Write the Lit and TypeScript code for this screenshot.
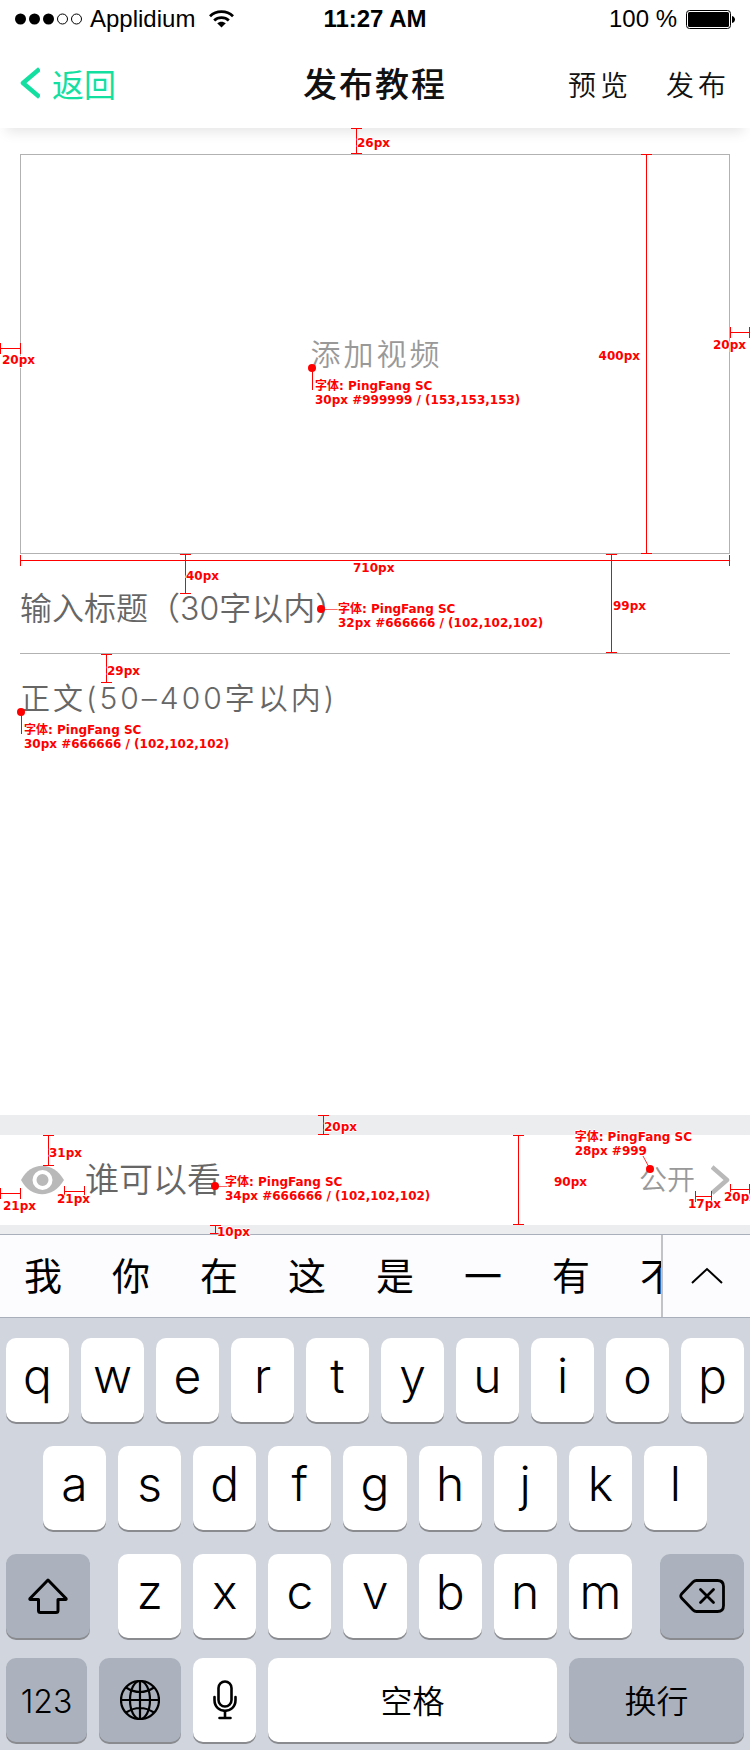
import { LitElement, html, css, svg, nothing } from "lit";
import { customElement, property } from "lit/decorators.js";
import { classMap } from "lit/directives/class-map.js";
import { styleMap } from "lit/directives/style-map.js";

interface Point {
  left?: number;
  right?: number;
  top: number;
}

interface Measure {
  axis: "x" | "y";
  at: Point;
  length?: number;
  label: string;
  labelAt: Point;
}

interface Note {
  dot: Point;
  leader: "down" | "right" | "diagonal";
  textAt: Point;
  lines: string[];
}

const px = (p: Point) => ({
  left: p.left === undefined ? undefined : `${p.left}px`,
  right: p.right === undefined ? undefined : `${p.right}px`,
  top: `${p.top}px`,
});

/** Red redline layer laid over the section that contains it. */
@customElement("spec-layer")
export class SpecLayer extends LitElement {
  @property({ attribute: false }) measures: Measure[] = [];
  @property({ attribute: false }) notes: Note[] = [];

  static styles = css`
    :host {
      position: absolute;
      inset: 0;
      z-index: 3;
      pointer-events: none;
      color: #f00;
      font: bold 12px/14px "DejaVu Sans", "Noto Sans CJK SC", sans-serif;
      white-space: nowrap;
    }
    .bar {
      position: absolute;
      box-sizing: border-box;
    }
    .bar.x {
      height: 11px;
      border: solid #f00;
      border-width: 0 1px;
      background: linear-gradient(#f00, #f00) center / 100% 1px no-repeat;
    }
    .bar.y {
      width: 11px;
      border: solid #f00;
      border-width: 1px 0;
      background: linear-gradient(#f00, #f00) center / 1px 100% no-repeat;
    }
    .text {
      position: absolute;
      text-shadow: 1px 0 #fff, -1px 0 #fff, 0 1px #fff, 0 -1px #fff;
    }
    .line {
      display: block;
    }
    .dot {
      position: absolute;
      overflow: visible;
    }
  `;

  private leader(kind: Note["leader"]) {
    if (kind === "down") return svg`<path d="M4.5 4V26" stroke="#f00"/>`;
    if (kind === "right") return svg`<path d="M4 4.5H21" stroke="#f00" opacity=".6"/>`;
    return svg`<path d="M4 4L-3 -9" stroke="#f00" opacity=".8"/>`;
  }

  render() {
    return html`
      ${this.measures.map(
        (m) => html`
          <span
            class=${classMap({ bar: true, [m.axis]: true })}
            style=${styleMap({
              ...px(m.at),
              [m.axis === "x" ? "width" : "height"]:
                m.length === undefined ? undefined : `${m.length}px`,
            })}
          ></span>
          <span class="text" style=${styleMap(px(m.labelAt))}>${m.label}</span>
        `
      )}
      ${this.notes.map(
        (n) => html`
          <svg class="dot" width="8" height="8" style=${styleMap(px(n.dot))} aria-hidden="true">
            ${this.leader(n.leader)}
            <circle cx="4" cy="4" r="4" fill="#f00" />
          </svg>
          <span class="text" style=${styleMap(px(n.textAt))}
            >${n.lines.map((l) => html`<span class="line">${l}</span>`)}</span
          >
        `
      )}
    `;
  }
}

const EDITOR_MEASURES: Measure[] = [
  { axis: "y", at: { left: 351, top: 0 }, length: 26, label: "26px", labelAt: { left: 357, top: 8 } },
  { axis: "y", at: { right: 98, top: 26 }, length: 400, label: "400px", labelAt: { right: 110, top: 221 } },
  { axis: "x", at: { left: 0, top: 215 }, length: 21, label: "20px", labelAt: { left: 2, top: 225 } },
  { axis: "x", at: { right: 0, top: 199 }, length: 20, label: "20px", labelAt: { right: 4, top: 210 } },
  { axis: "x", at: { left: 20, right: 20, top: 427 }, label: "710px", labelAt: { left: 353, top: 433 } },
  { axis: "y", at: { left: 180, top: 426 }, length: 40, label: "40px", labelAt: { left: 186, top: 441 } },
  { axis: "y", at: { right: 133, top: 426 }, length: 99, label: "99px", labelAt: { right: 104, top: 471 } },
  { axis: "y", at: { left: 101, top: 526 }, length: 29, label: "29px", labelAt: { left: 107, top: 536 } },
];

const EDITOR_NOTES: Note[] = [
  {
    dot: { left: 308, top: 236 },
    leader: "down",
    textAt: { left: 315, top: 251 },
    lines: ["字体: PingFang SC", "30px #999999 / (153,153,153)"],
  },
  {
    dot: { left: 317, top: 477 },
    leader: "right",
    textAt: { left: 338, top: 474 },
    lines: ["字体: PingFang SC", "32px #666666 / (102,102,102)"],
  },
  {
    dot: { left: 17, top: 580 },
    leader: "down",
    textAt: { left: 24, top: 595 },
    lines: ["字体: PingFang SC", "30px #666666 / (102,102,102)"],
  },
];

const AUDIENCE_MEASURES: Measure[] = [
  { axis: "y", at: { left: 318, top: 0 }, length: 20, label: "20px", labelAt: { left: 324, top: 5 } },
  { axis: "y", at: { left: 43, top: 20 }, length: 31, label: "31px", labelAt: { left: 49, top: 31 } },
  { axis: "x", at: { left: 0, top: 73 }, length: 21, label: "21px", labelAt: { left: 3, top: 84 } },
  { axis: "x", at: { left: 64, top: 71 }, length: 21, label: "21px", labelAt: { left: 57, top: 77 } },
  { axis: "y", at: { left: 210, top: 110 }, length: 9, label: "10px", labelAt: { left: 217, top: 110 } },
  { axis: "y", at: { right: 226, top: 20 }, length: 90, label: "90px", labelAt: { right: 163, top: 60 } },
  { axis: "x", at: { right: 38, top: 76 }, length: 17, label: "17px", labelAt: { right: 29, top: 82 } },
  { axis: "x", at: { right: 0, top: 69 }, length: 20, label: "20px", labelAt: { right: -7, top: 75 } },
];

const AUDIENCE_NOTES: Note[] = [
  {
    dot: { left: 211, top: 67 },
    leader: "right",
    textAt: { left: 225, top: 60 },
    lines: ["字体: PingFang SC", "34px #666666 / (102,102,102)"],
  },
  {
    dot: { right: 96, top: 50 },
    leader: "diagonal",
    textAt: { right: 58, top: 15 },
    lines: ["字体: PingFang SC", "28px #999"],
  },
];

@customElement("status-bar")
export class StatusBar extends LitElement {
  static styles = css`
    :host {
      display: grid;
      grid-template-columns: 1fr auto 1fr;
      align-items: center;
      height: 38px;
      padding: 0 15px;
      color: #000;
      font: 24px/28px "Liberation Sans", Arial, sans-serif;
    }
    .side {
      display: flex;
      align-items: center;
    }
    .carrier {
      margin: 0 14px 0 8px;
    }
    .time {
      font-weight: bold;
    }
    .end {
      justify-content: flex-end;
      gap: 9px;
    }
  `;

  render() {
    return html`
      <div class="side">
        <svg width="67" height="12" viewBox="0 0 67 12" aria-hidden="true">
          <circle cx="5.5" cy="6" r="5.5" />
          <circle cx="19.5" cy="6" r="5.5" />
          <circle cx="33.5" cy="6" r="5.5" />
          <circle cx="47.5" cy="6" r="5" fill="none" stroke="#000" />
          <circle cx="61.5" cy="6" r="5" fill="none" stroke="#000" />
        </svg>
        <span class="carrier">Applidium</span>
        <svg width="25" height="18" viewBox="0 0 25 18" aria-hidden="true">
          <g fill="none" stroke="#000" stroke-width="2.8">
            <path d="M1 6.2C7.3 .1 17.7 .1 24 6.2" />
            <path d="M5.2 10.4C9.2 6.6 15.8 6.6 19.8 10.4" />
          </g>
          <path d="M8.2 13.3C10.6 11.1 14.4 11.1 16.8 13.3L12.5 17.6Z" />
        </svg>
      </div>
      <span class="time">11:27 AM</span>
      <div class="side end">
        <span>100 %</span>
        <svg width="49" height="19" viewBox="0 0 49 19" aria-hidden="true">
          <rect x=".5" y=".5" width="44" height="18" rx="3" fill="none" stroke="#000" />
          <rect x="2" y="2" width="41" height="15" rx="1.5" />
          <path d="M46 6C48 6.5 49 8 49 9.5S48 12.5 46 13Z" />
        </svg>
      </div>
    `;
  }
}

type Glyph = "shift" | "delete" | "globe" | "mic";

interface Key {
  label: string;
  size: "letter" | "word" | "icon";
  grow: number;
  dark?: boolean;
  icon?: Glyph;
}

const letters = (s: string): Key[] =>
  [...s].map((label) => ({ label, size: "letter", grow: 63 }));

const GLYPHS: Record<Glyph, unknown> = {
  shift: html`<svg width="40" height="36" viewBox="0 0 40 36" fill="none" stroke="#000" stroke-width="3" stroke-linejoin="round" aria-hidden="true">
    <path d="M20 2L38 20.5Q38.5 21.5 37.5 21.5H30V32.5Q30 34.5 28 34.5H12.500Q10.5 34.5 10.5 32.5V21.5H2.5Q1.5 21.5 2 20.5Z" />
  </svg>`,
  delete: html`<svg width="46" height="34" viewBox="0 0 46 34" fill="none" stroke="#000" stroke-width="2.8" stroke-linecap="round" stroke-linejoin="round" aria-hidden="true">
    <path d="M17.5 1.5H38.5Q44.5 1.5 44.5 7.5V26.5Q44.5 32.5 38.5 32.5H17.5Q15.5 32.5 14 31L2.5 19Q1 17 2.5 15L14 3Q15.5 1.5 17.5 1.5Z" />
    <path d="M21.5 10.500L34.5 23.5M34.5 10.500L21.5 23.5" />
  </svg>`,
  globe: html`<svg width="40" height="40" viewBox="0 0 40 40" fill="none" stroke="#000" stroke-width="2.2" aria-hidden="true">
    <circle cx="20" cy="20" r="19" />
    <ellipse cx="20" cy="20" rx="10" ry="19" />
    <path d="M20 1V39M1 20H39M6 7.5Q20 16.5 34 7.5M6 32.5Q20 23.5 34 32.5" />
  </svg>`,
  mic: html`<svg width="24" height="40" viewBox="0 0 24 40" fill="none" stroke="#000" stroke-width="2.6" stroke-linecap="round" aria-hidden="true">
    <rect x="5.5" y="1.5" width="13" height="25" rx="6.5" />
    <path d="M1.5 17V20C1.5 34.5 22.5 34.5 22.5 20V17M12 31V37.5M6.5 38H17.5" />
  </svg>`,
};

const ROWS: { name: string; keys: Key[] }[] = [
  { name: "top", keys: letters("qwertyuiop") },
  { name: "home", keys: letters("asdfghjkl") },
  {
    name: "lower",
    keys: [
      { label: "shift", size: "icon", grow: 84, dark: true, icon: "shift" },
      ...letters("zxcvbnm"),
      { label: "delete", size: "icon", grow: 84, dark: true, icon: "delete" },
    ],
  },
  {
    name: "bottom",
    keys: [
      { label: "123", size: "word", grow: 81, dark: true },
      { label: "globe", size: "icon", grow: 82, dark: true, icon: "globe" },
      { label: "mic", size: "icon", grow: 63, icon: "mic" },
      { label: "空格", size: "word", grow: 289 },
      { label: "换行", size: "word", grow: 175, dark: true },
    ],
  },
];

@customElement("soft-keyboard")
export class SoftKeyboard extends LitElement {
  static styles = css`
    :host {
      display: block;
      background: #d1d5dd;
      font-family: Inter, "Noto Sans CJK SC", sans-serif;
    }
    button {
      margin: 0;
      padding: 0;
      border: 0;
      background: none;
      color: #000;
      font: inherit;
    }
    .candidates {
      display: flex;
      height: 82px;
      border: solid #a9b0bb;
      border-width: 1px 0;
      background: #fcfcfe;
    }
    .words {
      display: flex;
      flex: 1;
      gap: 50px;
      min-width: 0;
      overflow: hidden;
      padding-left: 24px;
    }
    .word {
      flex: none;
      width: 38px;
      font-size: 38px;
      line-height: 80px;
    }
    .expand {
      display: flex;
      flex: none;
      align-items: center;
      justify-content: center;
      width: 89px;
      border-left: 2px solid #c2c3c6;
    }
    .rows {
      display: grid;
      gap: 24px;
      padding: 20px 6px 8px;
    }
    .row {
      display: flex;
      gap: 12px;
    }
    .home {
      padding: 0 37px;
    }
    .bottom {
      margin-top: -4px;
    }
    .key {
      display: flex;
      flex: 1 1 0;
      align-items: center;
      justify-content: center;
      box-sizing: border-box;
      min-width: 0;
      height: 84px;
      border-radius: 10px;
      background: #fff;
      box-shadow: 0 2px #898b8f;
    }
    .letter {
      padding-bottom: 9px;
      font-size: 48px;
      font-weight: 350;
      line-height: 60px;
    }
    .label {
      padding-top: 3px;
      font-size: 32px;
      font-weight: 350;
      line-height: 40px;
    }
    .dark {
      background: #abb2bd;
    }
    .lower .icon:first-child {
      margin-right: 16px;
    }
    .lower .icon:last-child {
      margin-left: 16px;
    }
  `;

  render() {
    return html`
      <div class="candidates">
        <div class="words">
          ${[..."我你在这是一有不"].map((w) => html`<button class="word">${w}</button>`)}
        </div>
        <button class="expand" aria-label="展开">
          <svg width="32" height="18" viewBox="0 0 32 18" fill="none" stroke="#000" stroke-width="2" aria-hidden="true">
            <path d="M1 16L16 2L31 16" />
          </svg>
        </button>
      </div>
      <div class="rows">
        ${ROWS.map(
          (row) => html`<div class="row ${row.name}">
            ${row.keys.map(
              (k) => html`<button
                class=${classMap({
                  key: true,
                  letter: k.size === "letter",
                  label: k.size === "word",
                  icon: k.size === "icon",
                  dark: !!k.dark,
                })}
                style=${styleMap({ flexGrow: String(k.grow) })}
                aria-label=${k.icon ? k.label : nothing}
              >
                ${k.icon ? GLYPHS[k.icon] : k.label}
              </button>`
            )}
          </div>`
        )}
      </div>
    `;
  }
}

@customElement("app-root")
export class AppRoot extends LitElement {
  static styles = css`
    :host {
      display: flex;
      flex-direction: column;
      min-height: 100vh;
      overflow: hidden;
      background: #fff;
      color: #666;
      font-family: Inter, "Noto Sans CJK SC", sans-serif;
    }
    button,
    input,
    textarea {
      margin: 0;
      padding: 0;
      border: 0;
      border-radius: 0;
      outline: 0;
      background: none;
      color: inherit;
      font: inherit;
      letter-spacing: inherit;
    }
    ::placeholder {
      color: #666;
      opacity: 1;
    }
    .top {
      position: relative;
      z-index: 1;
      background: #fff;
      box-shadow: 0 10px 12px -6px rgba(0, 0, 0, 0.1);
    }
    .nav {
      display: grid;
      grid-template-columns: 1fr auto 1fr;
      align-items: center;
      height: 90px;
      padding: 0 20px;
      color: #111;
      font-family: "Noto Sans CJK SC", sans-serif;
    }
    .back {
      display: flex;
      align-items: center;
      justify-self: start;
      gap: 12px;
      color: #13dfa1;
      font-size: 32px;
      line-height: 40px;
    }
    .title {
      margin: 0;
      font-size: 34px;
      font-weight: 500;
      line-height: 40px;
      letter-spacing: 2px;
    }
    .actions {
      display: flex;
      justify-content: flex-end;
      gap: 34px;
      padding-top: 2px;
      font-size: 28px;
      font-weight: 350;
      line-height: 40px;
      letter-spacing: 4px;
    }
    .editor {
      position: relative;
      display: flex;
      flex: 1;
      flex-direction: column;
      padding: 26px 20px 0;
      font-weight: 350;
    }
    .video {
      height: 400px;
      border: 1px solid #b2b2b2;
      padding-left: 3px;
      color: #999;
      font-size: 30px;
      line-height: 40px;
      letter-spacing: 3px;
    }
    .heading {
      box-sizing: border-box;
      width: 100%;
      height: 100px;
      padding-top: 10px;
      border-bottom: 1px solid #b2b2b2;
      font-size: 32px;
      line-height: 48px;
    }
    .body {
      flex: 1;
      padding-top: 24px;
      font-size: 30px;
      line-height: 40px;
      letter-spacing: 3px;
      resize: none;
    }
    .audience {
      position: relative;
      border: solid #ebedef;
      border-width: 20px 0 9px;
    }
    .spec {
      inset: -20px 0 -9px;
    }
    .choose {
      display: flex;
      align-items: center;
      width: 100%;
      height: 90px;
      padding: 0 20px;
      text-align: left;
      line-height: 40px;
      font-weight: 350;
    }
    .who {
      flex: 1;
      padding-left: 21px;
      font-size: 34px;
    }
    .value {
      margin-right: 16px;
      color: #999;
      font-size: 28px;
    }
  `;

  render() {
    return html`
      <header class="top">
        <status-bar></status-bar>
        <nav class="nav">
          <button class="back">
            <svg width="20" height="32" viewBox="0 0 20 32" fill="none" stroke="currentColor" stroke-width="4.5" aria-hidden="true">
              <path d="M19.5 2L3 16L19.5 30" stroke-linejoin="round" />
            </svg>
            返回
          </button>
          <h1 class="title">发布教程</h1>
          <div class="actions">
            <button>预览</button>
            <button>发布</button>
          </div>
        </nav>
      </header>
      <section class="editor">
        <button class="video">添加视频</button>
        <input class="heading" type="text" maxlength="30" aria-label="标题" placeholder="输入标题（30字以内）" />
        <textarea class="body" maxlength="400" aria-label="正文" placeholder="正文(50–400字以内)"></textarea>
        <spec-layer .measures=${EDITOR_MEASURES} .notes=${EDITOR_NOTES}></spec-layer>
      </section>
      <section class="audience">
        <button class="choose">
          <svg width="44" height="30" viewBox="0 0 44 30" aria-hidden="true">
            <path d="M1 15C11 -4 33 -4 44 15C33 34 11 34 1 15Z" fill="#b9b9b9" />
            <circle cx="22.5" cy="15" r="8" fill="#b9b9b9" stroke="#fff" stroke-width="4" />
          </svg>
          <span class="who">谁可以看</span>
          <span class="value">公开</span>
          <svg width="19" height="30" viewBox="0 0 19 30" fill="none" stroke="#b9b9b9" stroke-width="4.5" aria-hidden="true">
            <path d="M1 2L16 15L1 28" stroke-linejoin="round" />
          </svg>
        </button>
        <spec-layer class="spec" .measures=${AUDIENCE_MEASURES} .notes=${AUDIENCE_NOTES}></spec-layer>
      </section>
      <soft-keyboard></soft-keyboard>
    `;
  }
}
